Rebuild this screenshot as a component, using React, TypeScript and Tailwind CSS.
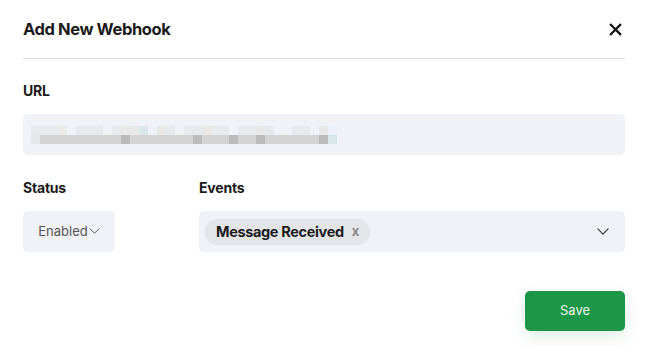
import React from "react";

const row1: [number, string][] = [
  [27, "#e6eaed"], [9, "#eaeaea"], [9, "#f1f2f7"], [27, "#e6eaed"], [9, "#f1f2f7"],
  [9, "#e6eaed"], [18, "#e8e8e8"], [9, "#d8e8ea"], [9, "#f1f2f7"], [9, "#e8e8e8"], [9, "#e6eaed"],
  [9, "#f1f2f7"], [18, "#e6eaed"], [9, "#e8e8e8"], [18, "#e6eaed"], [9, "#f1f2f7"],
  [18, "#e6eaed"], [9, "#e8e8e8"], [9, "#e6eaed"], [18, "#f1f2f7"], [18, "#e6eaed"], [9, "#f1f2f7"],
  [9, "#e8e8e8"], [9, "#ecf0f8"],
];
const row2: [number, string][] = [
  [9, "#e4e8ea"], [81, "#d4d4d4"], [9, "#bababa"], [63, "#d4d4d4"], [9, "#bbbbbb"],
  [27, "#d4d4d4"], [9, "#bbbbbb"], [18, "#d4d4d4"], [9, "#bbbbbb"], [54, "#d4d4d4"],
  [9, "#bbbbbb"], [9, "#d8e8ea"],
];

function Chevron({ className }: { className?: string }) {
  return (
    <svg viewBox="0 0 14 8" className={className} fill="none" stroke="currentColor" strokeWidth="1.3" strokeLinecap="round" strokeLinejoin="round">
      <path d="M1 1l6 6 6-6" />
    </svg>
  );
}

export default function App() {
  return (
    <div className="w-[650px] h-[355px] bg-white pl-[23px] pr-[25px] text-[#1a1a1a]" style={{ fontFamily: "Inter, 'Noto Sans', sans-serif" }}>
      <div className="flex items-center justify-between h-[59px] border-b border-[#d9d9d9]">
        <h1 className="text-[16.5px] font-bold tracking-[-0.4px] pt-[1px]">Add New Webhook</h1>
        <svg viewBox="0 0 14 14" className="w-[13px] h-[13px] mr-[3px]" stroke="#111" strokeWidth="2.4" strokeLinecap="square">
          <path d="M2 2l10 10M12 2L2 12" />
        </svg>
      </div>
      <div className="pt-[21px]">
        <div className="text-[14px] font-bold h-[22px] leading-[22px] tracking-[-0.2px]">URL</div>
        <div className="mt-[12px] h-[41px] rounded-[5px] bg-[#f1f2f7] flex flex-col justify-center pl-[8px]">
          <div className="flex h-[9px]">
            {row1.map(([w, c], i) => (
              <div key={i} style={{ width: w, background: c }} />
            ))}
          </div>
          <div className="flex h-[9px]">
            {row2.map(([w, c], i) => (
              <div key={i} style={{ width: w, background: c }} />
            ))}
          </div>
        </div>
      </div>
      <div className="flex gap-[84px] mt-[21px]">
        <div className="w-[92px]">
          <div className="text-[14px] font-bold h-[22px] leading-[22px] tracking-[-0.2px] pt-[1px]">Status</div>
          <div className="mt-[13px] h-[41px] rounded-[5px] bg-[#f1f2f7] flex items-center justify-center text-[13px] text-[#555]">
            <span>Enabled</span>
            <Chevron className="w-[11px] h-[6px] text-[#555] ml-[1px] -mt-[2px]" />
          </div>
        </div>
        <div className="flex-1">
          <div className="text-[14px] font-bold h-[22px] leading-[22px] tracking-[-0.2px] pt-[1px]">Events</div>
          <div className="mt-[13px] h-[41px] rounded-[5px] bg-[#f1f2f7] flex items-center px-[6px]">
            <div className="h-[26px] rounded-full bg-[#e4e5e9] flex items-center pl-[11px] pr-[11px]">
              <span className="text-[14.5px] font-bold tracking-[-0.35px]">Message Received</span>
              <span className="ml-[8px] text-[13px] font-bold text-[#8a8a8a]">x</span>
            </div>
            <div className="flex-1" />
            <Chevron className="w-[12px] h-[7px] text-[#333] mr-[10px]" />
          </div>
        </div>
      </div>
      <div className="flex justify-end mt-[39px]">
        <button className="w-[100px] h-[40px] rounded-[5px] bg-[#1c9647] text-[#eaf6ee] text-[13px] shadow-[0_6px_16px_rgba(28,150,71,0.15)]">
          Save
        </button>
      </div>
    </div>
  );
}
